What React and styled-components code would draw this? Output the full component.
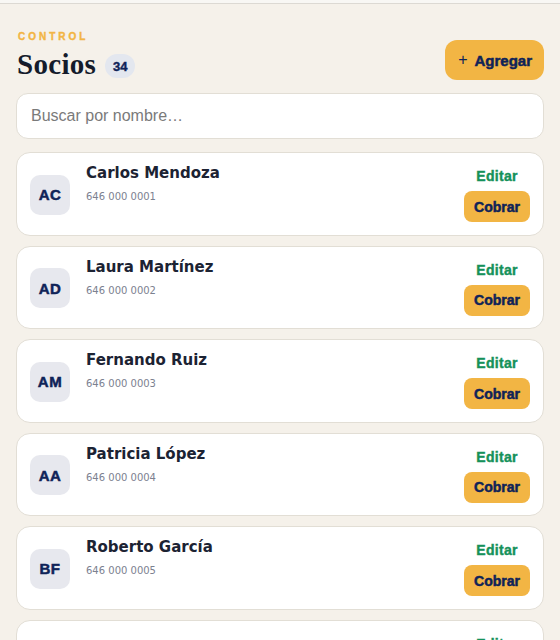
import React from "react";
import styled, { createGlobalStyle } from "styled-components";

const GlobalStyle = createGlobalStyle`
  body {
    margin: 0;
    background: #f5f1ea;
    font-family: "DejaVu Sans", sans-serif;
  }
  * {
    box-sizing: border-box;
  }
`;

const TopBar = styled.div`
  height: 4px;
  background: #f8f7f4;
  border-bottom: 1px solid #dcd9d3;
`;

const Page = styled.div`
  padding: 27px 16px 0;
`;

const Header = styled.div`
  display: flex;
  justify-content: space-between;
  align-items: flex-end;
  margin-bottom: 13px;
`;

const TitleBlock = styled.div`
  display: flex;
  flex-direction: column;
`;

const Eyebrow = styled.span`
  font-family: "Liberation Sans", sans-serif;
  font-weight: 700;
  font-size: 10px;
  line-height: 12px;
  letter-spacing: 3px;
  color: #f2b544;
  -webkit-text-stroke: 0.4px #f2b544;
  margin-left: 2px;
  margin-bottom: 5px;
`;

const TitleRow = styled.div`
  display: flex;
  align-items: center;
  gap: 9px;
`;

const Title = styled.h1`
  margin: 0;
  font-family: "Liberation Serif", serif;
  font-weight: 700;
  font-size: 29px;
  line-height: 32px;
  letter-spacing: 0.3px;
  color: #141b2b;
  margin-left: 1px;
`;

const CountBadge = styled.span`
  display: inline-flex;
  align-items: center;
  justify-content: center;
  width: 30px;
  height: 24px;
  border-radius: 12px;
  background: #e3e7ef;
  color: #0f2358;
  font-family: "Liberation Sans", sans-serif;
  font-weight: 700;
  font-size: 13px;
  -webkit-text-stroke: 0.4px #0f2358;
  margin-top: 4px;
`;

const Button = styled.button`
  border: none;
  cursor: pointer;
  background: #f2b544;
  color: #0f2358;
  font-family: "Liberation Sans", sans-serif;
  font-weight: 700;
  -webkit-text-stroke: 0.5px #0f2358;
  border-radius: ${(p) => (p.$small ? "8px" : "12px")};
  font-size: ${(p) => (p.$small ? "14px" : "15px")};
  height: ${(p) => (p.$small ? "31px" : "40px")};
  padding: ${(p) => (p.$small ? "0 10px" : "0 12px 0 13px")};
  display: inline-flex;
  align-items: center;
  gap: 7px;
`;

const Plus = styled.span`
  font-weight: 400;
  font-size: 16px;
  -webkit-text-stroke: 0;
`;

const Search = styled.input`
  display: block;
  width: 100%;
  height: 46px;
  border: 1px solid #e2ded5;
  border-radius: 12px;
  background: #ffffff;
  padding: 0 14px;
  font-family: "Liberation Sans", sans-serif;
  font-size: 16px;
  color: #333;
  margin-bottom: 13px;
  outline: none;
  &::placeholder {
    color: #7a7a7a;
  }
`;

const List = styled.div`
  display: flex;
  flex-direction: column;
  gap: 10px;
`;

const Card = styled.div`
  display: flex;
  align-items: center;
  background: #ffffff;
  border: 1px solid #e2ded5;
  border-radius: 14px;
  padding: 14px 13px 12.5px 13px;
`;

const Avatar = styled.div`
  width: 40px;
  height: 40px;
  flex-shrink: 0;
  border-radius: 10px;
  background: #e7e8ee;
  color: #0f2358;
  display: flex;
  align-items: center;
  justify-content: center;
  font-family: "Liberation Sans", sans-serif;
  font-weight: 700;
  font-size: 15px;
  letter-spacing: 0.5px;
  -webkit-text-stroke: 0.5px #0f2358;
`;

const Info = styled.div`
  flex: 1;
  align-self: flex-start;
  margin-left: 16px;
  margin-top: -3px;
  display: flex;
  flex-direction: column;
`;

const Name = styled.div`
  font-weight: 700;
  font-size: 15px;
  line-height: 18px;
  color: #1c2333;
`;

const Phone = styled.div`
  font-size: 10px;
  line-height: 13px;
  color: #7c8190;
  margin-top: 8px;
`;

const Actions = styled.div`
  display: flex;
  flex-direction: column;
  align-items: center;
  gap: 6px;
`;

const EditLink = styled.a`
  font-family: "Liberation Sans", sans-serif;
  font-weight: 700;
  font-size: 14px;
  line-height: 18px;
  letter-spacing: 0.3px;
  color: #15915a;
  -webkit-text-stroke: 0.4px #15915a;
  text-decoration: none;
  cursor: pointer;
`;

const socios = [
  { initials: "AC", name: "Carlos Mendoza", phone: "646 000 0001" },
  { initials: "AD", name: "Laura Martínez", phone: "646 000 0002" },
  { initials: "AM", name: "Fernando Ruiz", phone: "646 000 0003" },
  { initials: "AA", name: "Patricia López", phone: "646 000 0004" },
  { initials: "BF", name: "Roberto García", phone: "646 000 0005" },
  { initials: "", name: "", phone: "" },
];

export default function App() {
  return (
    <>
      <GlobalStyle />
      <TopBar />
      <Page>
        <Header>
          <TitleBlock>
            <Eyebrow>CONTROL</Eyebrow>
            <TitleRow>
              <Title>Socios</Title>
              <CountBadge>34</CountBadge>
            </TitleRow>
          </TitleBlock>
          <Button>
            <Plus>+</Plus>
            Agregar
          </Button>
        </Header>
        <Search placeholder="Buscar por nombre…" />
        <List>
          {socios.map((s, i) => (
            <Card key={i}>
              <Avatar>{s.initials}</Avatar>
              <Info>
                <Name>{s.name}</Name>
                <Phone>{s.phone}</Phone>
              </Info>
              <Actions>
                <EditLink>Editar</EditLink>
                <Button $small>Cobrar</Button>
              </Actions>
            </Card>
          ))}
        </List>
      </Page>
    </>
  );
}
